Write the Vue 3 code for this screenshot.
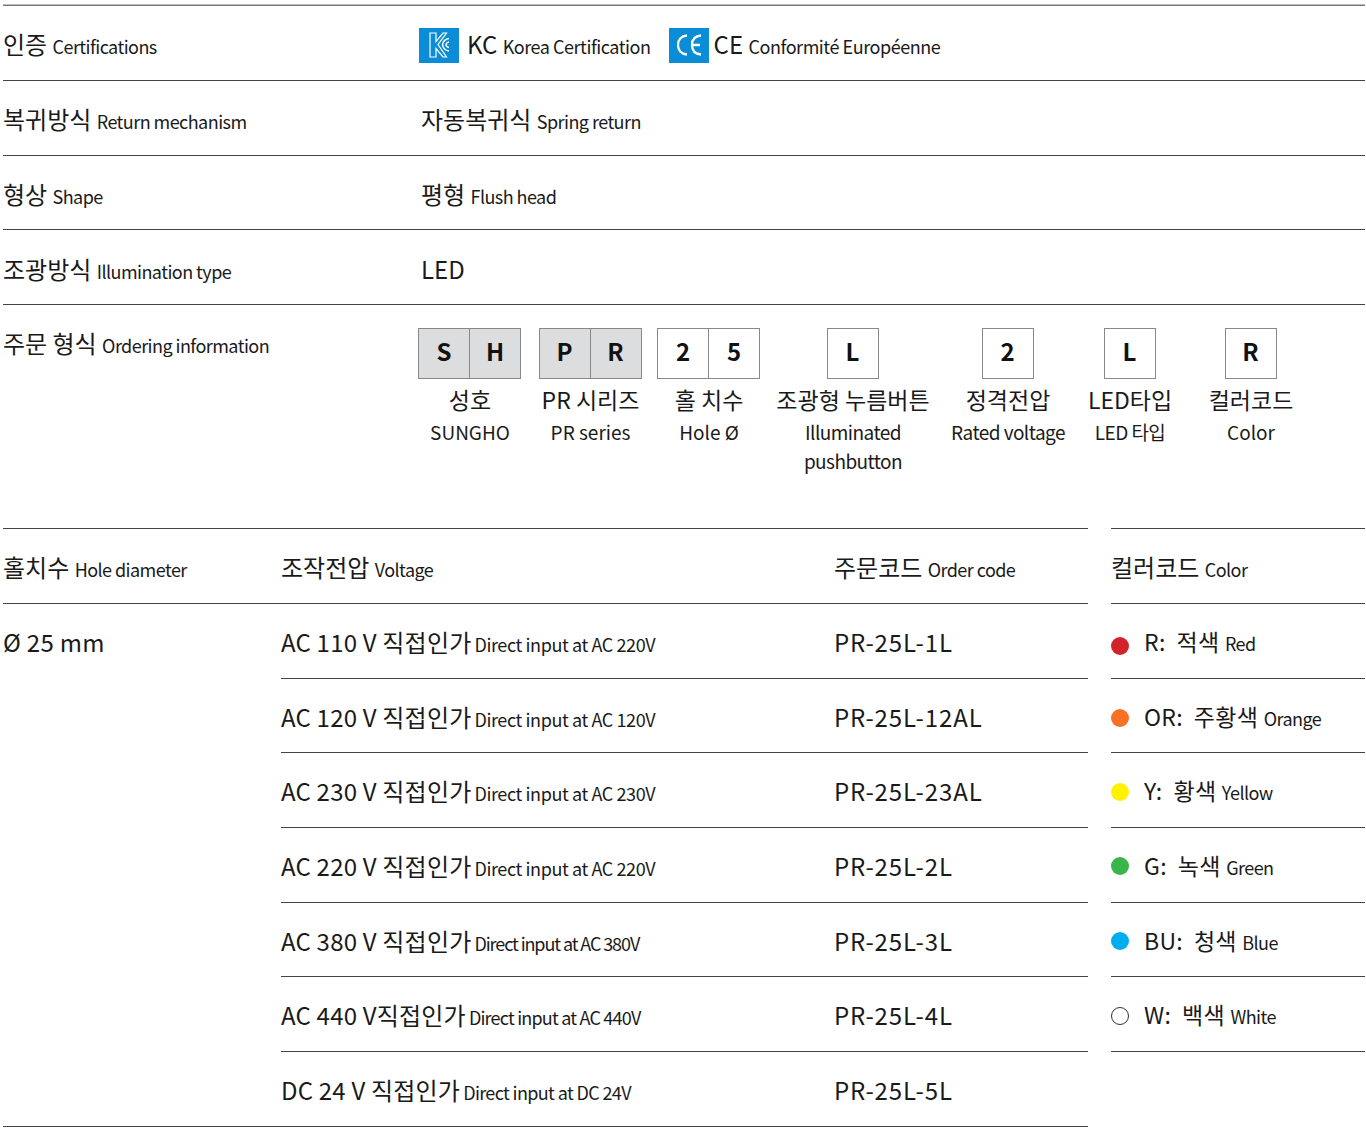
<template>
  <div class="page">
    <section class="specs">
      <div class="spec-row">
        <div class="spec-label">인증 <small>Certifications</small></div>
        <div class="spec-value certs">
          <div class="cert">
            <svg class="cert-icon" viewBox="0 0 40 35">
              <rect width="40" height="35" fill="#0a8dd6" />
              <path d="M11 5h6v8.500L24 5h3.500L19 16.500 27.500 29H24l-7-8.500V29h-6z" fill="none" stroke="#fff" stroke-width="1.200" />
              <path d="M30 10.500a7.500 7.500 0 0 0-6.500 6a7.500 7.500 0 0 0 6.500 6.500M30 14a3.500 3.500 0 0 0-3 2.500A3.500 3.500 0 0 0 30 19.500" fill="none" stroke="#fff" stroke-width="1.500" />
            </svg>
            <span>KC <small>Korea Certification</small></span>
          </div>
          <div class="cert">
            <svg class="cert-icon ce" viewBox="0 0 40 35">
              <rect width="40" height="35" fill="#0a8dd6" />
              <path d="M18 7.500C12 8 9 12 9 17s3 9 9 9.500" fill="none" stroke="#fff" stroke-width="2.300" />
              <path d="M32 7.500c-6 .5-9 4-9 9.500s3 9 9 9.500M23.500 17H31" fill="none" stroke="#fff" stroke-width="2.300" />
            </svg>
            <span>CE <small>Conformité Européenne</small></span>
          </div>
        </div>
      </div>
      <div class="spec-row">
        <div class="spec-label">복귀방식 <small>Return mechanism</small></div>
        <div class="spec-value">자동복귀식 <small>Spring return</small></div>
      </div>
      <div class="spec-row">
        <div class="spec-label">형상 <small>Shape</small></div>
        <div class="spec-value">평형 <small>Flush head</small></div>
      </div>
      <div class="spec-row">
        <div class="spec-label">조광방식 <small>Illumination type</small></div>
        <div class="spec-value">LED</div>
      </div>
      <div class="order-row">
        <div class="spec-label order-label">주문 형식 <small>Ordering information</small></div>
        <div class="order-grid">
          <div v-for="part in orderParts" :key="part.ko" class="order-part">
            <div class="order-boxes">
              <span v-for="ch in part.chars" :key="ch" class="order-box" :class="{ filled: part.filled }">{{ ch }}</span>
            </div>
            <div class="order-ko">{{ part.ko }}</div>
            <div class="order-en" :class="{ tight: part.tight }">{{ part.en }}</div>
          </div>
        </div>
      </div>
    </section>

    <section class="tables">
      <div class="codes">
        <div class="codes-head">
          <div class="hole-col">홀치수 <small>Hole diameter</small></div>
          <div class="volt-col">조작전압 <small>Voltage</small></div>
          <div class="code-col">주문코드 <small>Order code</small></div>
        </div>
        <div class="codes-body">
          <div class="hole-col hole-val">Ø 25 mm</div>
          <div class="codes-rows">
            <div v-for="row in voltages" :key="row.code" class="code-row">
              <div class="volt-col volt-val">
                {{ row.volt }}<span class="direct" :style="{ letterSpacing: row.ls + 'px' }">{{ row.direct }}</span>
              </div>
              <div class="code-col code-val">{{ row.code }}</div>
            </div>
          </div>
        </div>
      </div>
      <div class="colors">
        <div class="color-head"><span>컬러코드 <small>Color</small></span></div>
        <div v-for="c in colors" :key="c.key" class="color-row">
          <span class="dot" :class="{ hollow: c.hollow }" :style="{ background: c.hex, marginTop: c.dy + 'px' }"></span>
          <span class="color-text">{{ c.key }}:&nbsp; {{ c.ko }} <small>{{ c.en }}</small></span>
        </div>
      </div>
    </section>
  </div>
</template>

<script setup>
const orderParts = [
  { chars: ['S', 'H'], filled: true, ko: '성호', en: 'SUNGHO' },
  { chars: ['P', 'R'], filled: true, ko: 'PR 시리즈', en: 'PR series' },
  { chars: ['2', '5'], ko: '홀 치수', en: 'Hole Ø' },
  { chars: ['L'], ko: '조광형 누름버튼', en: 'Illuminated pushbutton', tight: true },
  { chars: ['2'], ko: '정격전압', en: 'Rated voltage', tight: true },
  { chars: ['L'], ko: 'LED타입', en: 'LED 타입', tight: true },
  { chars: ['R'], ko: '컬러코드', en: 'Color' },
]

const voltages = [
  { volt: 'AC 110 V 직접인가', direct: 'Direct input at AC 220V', code: 'PR-25L-1L', ls: -0.4 },
  { volt: 'AC 120 V 직접인가', direct: 'Direct input at AC 120V', code: 'PR-25L-12AL', ls: -0.4 },
  { volt: 'AC 230 V 직접인가', direct: 'Direct input at AC 230V', code: 'PR-25L-23AL', ls: -0.4 },
  { volt: 'AC 220 V 직접인가', direct: 'Direct input at AC 220V', code: 'PR-25L-2L', ls: -0.4 },
  { volt: 'AC 380 V 직접인가', direct: 'Direct input at AC 380V', code: 'PR-25L-3L', ls: -1.1 },
  { volt: 'AC 440 V직접인가', direct: 'Direct input at AC 440V', code: 'PR-25L-4L', ls: -0.8 },
  { volt: 'DC 24 V 직접인가', direct: 'Direct input at DC 24V', code: 'PR-25L-5L', ls: -0.63 },
]

const colors = [
  { key: 'R', ko: '적색', en: 'Red', hex: '#d2232a', dy: 10 },
  { key: 'OR', ko: '주황색', en: 'Orange', hex: '#f97125', dy: 4 },
  { key: 'Y', ko: '황색', en: 'Yellow', hex: '#fff200', dy: 4 },
  { key: 'G', ko: '녹색', en: 'Green', hex: '#39b54a', dy: 2 },
  { key: 'BU', ko: '청색', en: 'Blue', hex: '#00aeef', dy: 2 },
  { key: 'W', ko: '백색', en: 'White', hex: '#fff', hollow: true, dy: 4 },
]
</script>

<style>
body {
  background: #fff;
}
</style>

<style scoped>
.page {
  width: 1366px;
  height: 1131px;
  box-sizing: border-box;
  padding: 5px 1px 0 3px;
  font-family: 'Noto Sans CJK KR', 'Noto Sans', sans-serif;
  font-size: 24px;
  color: #1a1a1a;
  background: #fff;
  overflow: hidden;
}

small {
  font-size: 18px;
  letter-spacing: -0.55px;
}

.specs {
  border-top: 1px solid #777;
  box-shadow: 0 -1px 0 #bbb;
}

.spec-row {
  height: 72.300px;
  padding-top: 1.500px;
  display: flex;
  align-items: center;
  border-bottom: 1px solid #444;
}

.spec-label {
  width: 418px;
  flex: none;
  white-space: pre;
}

.spec-value {
  white-space: pre;
}

.certs {
  display: flex;
  gap: 18px;
  margin-left: -2px;
}

.cert {
  display: flex;
  align-items: center;
  white-space: pre;
}

.cert small {
  letter-spacing: -0.45px;
}

.cert-icon {
  width: 40px;
  height: 35px;
  margin-top: 4px;
  margin-right: 8px;
}

.cert-icon.ce {
  margin-right: 5px;
}

.order-row {
  display: flex;
  height: 222.800px;
}

.order-label {
  padding-top: 20px;
  width: 414px;
}

.order-grid {
  display: grid;
  grid-template-columns: 106px 135px 102px 186px 124px 120px 122px;
  align-content: start;
  padding-top: 23px;
}

.order-part {
  display: flex;
  flex-direction: column;
  align-items: center;
  text-align: center;
}

.order-boxes {
  display: flex;
}

.order-box {
  width: 52px;
  height: 51px;
  box-sizing: border-box;
  border: 1px solid #888;
  margin-left: -1px;
  padding-bottom: 7px;
  display: flex;
  align-items: center;
  justify-content: center;
  font-size: 24px;
  font-weight: 700;
  color: #111;
}

.order-box.filled {
  background: #dcddde;
}

.order-ko {
  margin-top: 4px;
  font-size: 23px;
  line-height: 32px;
  white-space: nowrap;
}

.order-en {
  margin-top: 2px;
  width: 130px;
  font-size: 19px;
  line-height: 29px;
}

.order-en.tight {
  letter-spacing: -0.55px;
}

.tables {
  display: flex;
  gap: 22px;
}

.codes {
  width: 1085px;
  border-top: 1px solid #444;
  border-bottom: 1px solid #444;
}

.codes-head {
  display: flex;
  align-items: center;
  height: 73px;
  padding-top: 1px;
  border-bottom: 1px solid #444;
}

.hole-col {
  width: 278px;
  flex: none;
  white-space: pre;
}

.volt-col {
  width: 553px;
  flex: none;
  white-space: pre;
}

.volt-val {
  letter-spacing: 0.2px;
}

.code-col {
  flex: 1;
  white-space: pre;
}

.code-val {
  letter-spacing: 0.9px;
}

.codes-body {
  display: flex;
}

.hole-val {
  height: 74px;
  line-height: 76px;
  letter-spacing: 0.3px;
}

.codes-rows {
  flex: 1;
}

.code-row {
  display: flex;
  align-items: center;
  height: 72.700px;
  padding-top: 1px;
  border-bottom: 1px solid #444;
}

.code-row:last-child {
  border-bottom: 0;
}

.direct {
  margin-left: 3px;
  font-size: 18px;
}

.colors {
  flex: 1;
  margin-left: 1px;
  border-top: 1px solid #444;
}

.color-head {
  height: 73px;
  padding-top: 1px;
  display: flex;
  align-items: center;
  border-bottom: 1px solid #444;
  white-space: pre;
}

.color-row {
  height: 73.700px;
  display: flex;
  align-items: center;
  gap: 15px;
  font-size: 23px;
  border-bottom: 1px solid #444;
  white-space: pre;
}

.color-text {
  letter-spacing: 0.3px;
}

.dot {
  width: 18px;
  height: 18px;
  box-sizing: border-box;
  border-radius: 50%;
}

.dot.hollow {
  border: 1px solid #333;
}
</style>
